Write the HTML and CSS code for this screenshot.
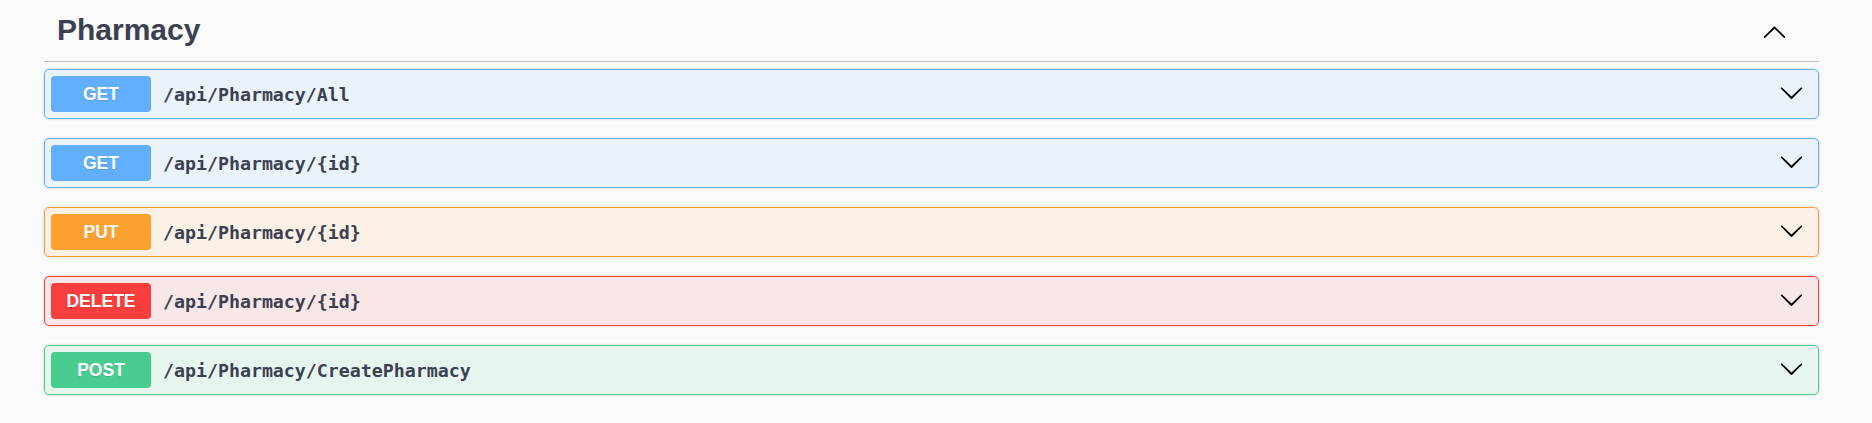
FILE: index.html
```html
<!DOCTYPE html>
<html>
<head>
<meta charset="utf-8">
<link rel="stylesheet" href="styles.css">
</head>
<body>
<div class="tag-section">
  <div class="tag-header">
    <h3 class="tag-title">Pharmacy</h3>
    <svg class="arrow arrow-up" viewBox="0 0 20 20" width="25" height="25"><path d="M17.418 14.908c.272.268.709.268.979 0s.271-.701 0-.969l-7.908-7.83c-.27-.268-.707-.268-.979 0l-7.908 7.83c-.27.268-.27.701 0 .969.271.268.709.268.979 0L10 7.767l7.418 7.141z"/></svg>
  </div>
  <div class="opblock get">
    <span class="method">GET</span>
    <span class="path">/api/Pharmacy/All</span>
    <svg class="arrow arrow-down" viewBox="0 0 20 20" width="25" height="25"><path d="M17.418 6.109c.272-.268.709-.268.979 0s.271.701 0 .969l-7.908 7.83c-.27.268-.707.268-.979 0l-7.908-7.83c-.27-.268-.27-.701 0-.969.271-.268.709-.268.979 0L10 13.25l7.418-7.141z"/></svg>
  </div>
  <div class="opblock get">
    <span class="method">GET</span>
    <span class="path">/api/Pharmacy/{id}</span>
    <svg class="arrow arrow-down" viewBox="0 0 20 20" width="25" height="25"><path d="M17.418 6.109c.272-.268.709-.268.979 0s.271.701 0 .969l-7.908 7.83c-.27.268-.707.268-.979 0l-7.908-7.83c-.27-.268-.27-.701 0-.969.271-.268.709-.268.979 0L10 13.25l7.418-7.141z"/></svg>
  </div>
  <div class="opblock put">
    <span class="method">PUT</span>
    <span class="path">/api/Pharmacy/{id}</span>
    <svg class="arrow arrow-down" viewBox="0 0 20 20" width="25" height="25"><path d="M17.418 6.109c.272-.268.709-.268.979 0s.271.701 0 .969l-7.908 7.83c-.27.268-.707.268-.979 0l-7.908-7.83c-.27-.268-.27-.701 0-.969.271-.268.709-.268.979 0L10 13.25l7.418-7.141z"/></svg>
  </div>
  <div class="opblock delete">
    <span class="method">DELETE</span>
    <span class="path">/api/Pharmacy/{id}</span>
    <svg class="arrow arrow-down" viewBox="0 0 20 20" width="25" height="25"><path d="M17.418 6.109c.272-.268.709-.268.979 0s.271.701 0 .969l-7.908 7.83c-.27.268-.707.268-.979 0l-7.908-7.83c-.27-.268-.27-.701 0-.969.271-.268.709-.268.979 0L10 13.25l7.418-7.141z"/></svg>
  </div>
  <div class="opblock post">
    <span class="method">POST</span>
    <span class="path">/api/Pharmacy/CreatePharmacy</span>
    <svg class="arrow arrow-down" viewBox="0 0 20 20" width="25" height="25"><path d="M17.418 6.109c.272-.268.709-.268.979 0s.271.701 0 .969l-7.908 7.83c-.27.268-.707.268-.979 0l-7.908-7.83c-.27-.268-.27-.701 0-.969.271-.268.709-.268.979 0L10 13.25l7.418-7.141z"/></svg>
  </div>
</div>
</body>
</html>
```

FILE: styles.css
```css
html, body {
  margin: 0;
  padding: 0;
  background: #fafafa;
}

body {
  font-family: "Liberation Sans", Arial, sans-serif;
  color: #3b4151;
}

.tag-section {
  width: 1775px;
  margin-left: 44px;
}

.tag-header {
  display: flex;
  align-items: center;
  padding: 13px 32px 14px 13px;
  border-bottom: 1px solid rgba(59, 65, 81, 0.3);
  margin-bottom: 7px;
}

.tag-title {
  flex: 1;
  margin: 0;
  font-size: 30px;
  line-height: 34px;
  font-weight: 700;
  color: #3b4151;
}

.arrow {
  display: block;
  flex: none;
  fill: #000;
}

.arrow-up {
  margin-top: 2px;
}

.opblock {
  display: flex;
  align-items: center;
  box-sizing: border-box;
  height: 50px;
  padding: 0 14px 0 6px;
  border: 1px solid;
  border-radius: 5px;
  box-shadow: 0 0 3px rgba(0, 0, 0, 0.19);
  margin-bottom: 19px;
}

.method {
  flex: none;
  width: 100px;
  height: 36px;
  line-height: 36px;
  text-align: center;
  border-radius: 4px;
  color: #fff;
  font-size: 17.5px;
  font-weight: 700;
  text-shadow: 0 1px 0 rgba(0, 0, 0, 0.1);
}

.path {
  flex: 1;
  margin-left: 12px;
  font-family: "DejaVu Sans Mono", monospace;
  font-size: 18.25px;
  font-weight: 700;
  color: #3b4151;
}

.arrow-down {
  margin-bottom: 3px;
}

.get {
  border-color: #61affe;
  background: rgba(97, 175, 254, 0.1);
}
.get .method { background: #61affe; }

.put {
  border-color: #fca130;
  background: rgba(252, 161, 48, 0.1);
}
.put .method { background: #fca130; }

.delete {
  border-color: #f93e3e;
  background: rgba(249, 62, 62, 0.1);
}
.delete .method { background: #f93e3e; }

.post {
  border-color: #49cc90;
  background: rgba(73, 204, 144, 0.1);
}
.post .method { background: #49cc90; }
```
